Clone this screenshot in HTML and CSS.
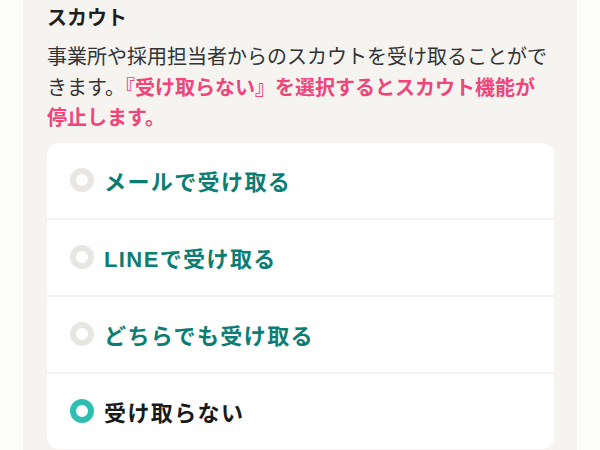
FILE: index.html
```html
<!DOCTYPE html>
<html lang="ja">
<head>
<meta charset="utf-8">
<link rel="stylesheet" href="styles.css">
</head>
<body>
<section class="panel">
  <h2 class="title">スカウト</h2>
  <p class="desc">事業所や採用担当者からのスカウトを受け取ることがで<br>きます。<strong class="warn">『受け取らない』を選択するとスカウト機能が<br>停止します。</strong></p>
  <ul class="options">
    <li class="option"><span class="radio"></span><span class="label">メールで受け取る</span></li>
    <li class="option"><span class="radio"></span><span class="label">LINEで受け取る</span></li>
    <li class="option"><span class="radio"></span><span class="label">どちらでも受け取る</span></li>
    <li class="option selected"><span class="radio"></span><span class="label">受け取らない</span></li>
  </ul>
</section>
</body>
</html>
```

FILE: styles.css
```css
html, body {
  margin: 0;
  padding: 0;
  background: #fdfdfc;
  font-family: "Noto Sans CJK JP", "Noto Sans", sans-serif;
}
.panel {
  margin-left: 23px;
  width: 530px;
  height: 450px;
  padding: 2px 0 0 24px;
  background: #f5f4f1;
  overflow: hidden;
}
.title {
  margin: 0;
  font-size: 20px;
  line-height: 30px;
  font-weight: 700;
  color: #1e1e1e;
}
.desc {
  margin: 9px 0 0;
  width: 506px;
  font-size: 20px;
  line-height: 30.5px;
  color: #333;
}
.warn {
  color: #f1457a;
  font-weight: 700;
}
.options {
  list-style: none;
  margin: 10px 0 0;
  padding: 0;
  width: 507px;
  background: #fff;
  border-radius: 12px;
}
.option {
  height: 75px;
  display: flex;
  align-items: center;
  gap: 10px;
  padding-left: 23px;
  border-bottom: 2px solid #f2f1ee;
}
.option:last-child {
  border-bottom: none;
}
.radio {
  width: 12px;
  height: 12px;
  border: 6px solid #e7e6e3;
  border-radius: 50%;
  background: #fff;
  flex: none;
}
.label {
  font-family: "Liberation Sans", "Noto Sans CJK JP", sans-serif;
  font-size: 22px;
  font-weight: 700;
  letter-spacing: 1.4px;
  color: #0b7d72;
}
.selected .radio {
  border-color: #2ebfb2;
}
.selected .label {
  color: #1a1a1a;
}
```
